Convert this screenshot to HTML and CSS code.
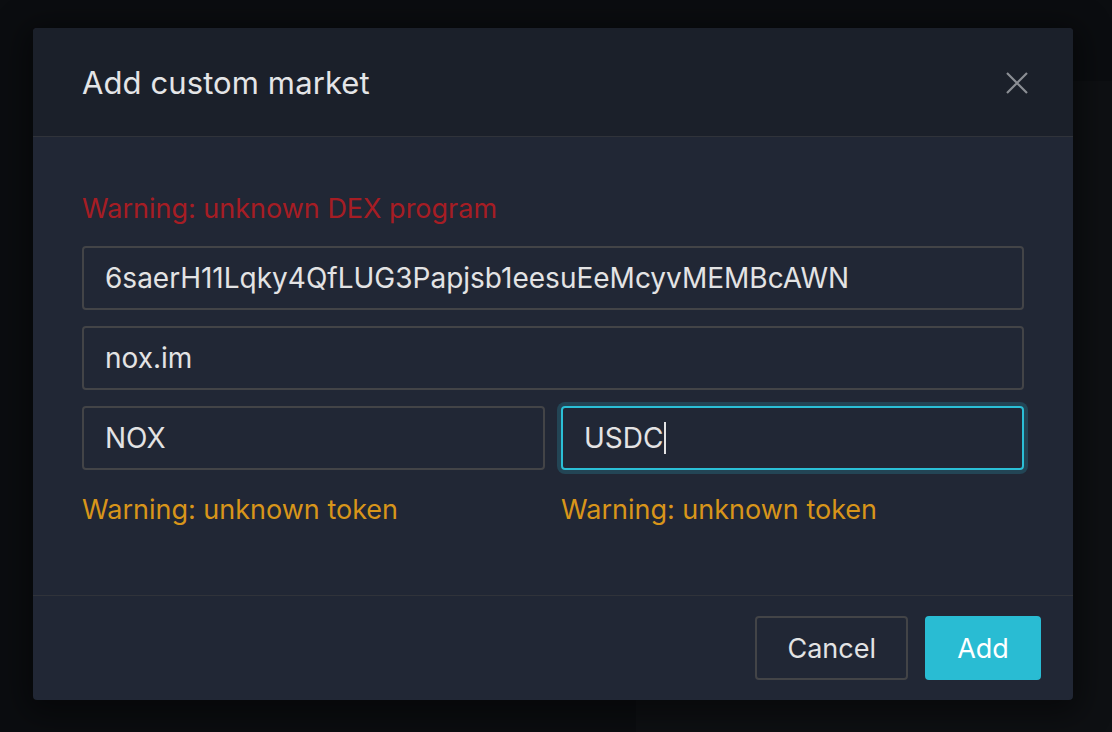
FILE: index.html
```html
<!DOCTYPE html>
<html>
<head>
<meta charset="UTF-8">
<title>Add custom market</title>
<link rel="stylesheet" href="styles.css">
</head>
<body>

<!-- dimmed page behind the mask -->
<div class="page-strip strip-right"></div>
<div class="page-strip strip-bottom"></div>

<div class="modal">
	<div class="modal-header">
		<div class="modal-title">Add custom market</div>
		<button type="button" class="modal-close" aria-label="Close">
			<svg width="24" height="24" viewBox="0 0 24 24">
				<path d="M2 2 L22 22 M22 2 L2 22" stroke="#8b8e94" stroke-width="2.2" fill="none"/>
			</svg>
		</button>
	</div>

	<div class="modal-body">
		<div class="msg msg-error">Warning: unknown DEX program</div>
		<div class="field">6saerH11Lqky4QfLUG3Papjsb1eesuEeMcyvMEMBcAWN</div>
		<div class="field">nox.im</div>
		<div class="row">
			<div class="col">
				<div class="field">NOX</div>
				<div class="msg msg-warn">Warning: unknown token</div>
			</div>
			<div class="col">
				<div class="field focused">USDC<span class="caret"></span></div>
				<div class="msg msg-warn">Warning: unknown token</div>
			</div>
		</div>
	</div>

	<div class="modal-footer">
		<button type="button" class="btn">Cancel</button>
		<button type="button" class="btn btn-primary">Add</button>
	</div>
</div>

</body>
</html>
```

FILE: styles.css
```css
* {box-sizing: border-box;}
body {margin: 0; width: 1112px; height: 732px; overflow: hidden; background: #0b0d10; font-family: Inter, "Liberation Sans", sans-serif; color: #e3e3e4; position: relative;}

.page-strip {position: absolute; background: #0e1013;}
.strip-right {left: 1073px; top: 81px; width: 39px; height: 651px;}
.strip-bottom {left: 636px; top: 700px; width: 476px; height: 32px;}

.modal {position: absolute; left: 33px; top: 28px; width: 1040px; height: 672px; border-radius: 4px; overflow: hidden; background: #212735; box-shadow: 0 6px 32px 8px rgba(0,0,0,0.45); display: flex; flex-direction: column;}

.modal-header {height: 109px; background: #1b202a; border-bottom: 1px solid #30333a; display: flex; align-items: center; justify-content: space-between; padding: 0 44px 0 49px;}
.modal-title {font-size: 31px; font-weight: 400; color: #e4e5e7; letter-spacing: 0.1px;}
.modal-close {background: none; border: 0; padding: 0; width: 24px; height: 24px; margin-top: 2px;}
.modal-close svg {display: block;}

.modal-body {flex: 1; padding: 51px 49px 0 49px; display: flex; flex-direction: column; gap: 16px;}
.msg {font-size: 27px; line-height: 42px; height: 42px;}
.msg-error {color: #a61d24;}
.msg-warn {color: #d8951a; margin-top: 3px;}

.field {height: 64px; border: 2px solid #434447; border-radius: 4px; padding: 0 21px; display: flex; align-items: center; font-size: 28px; color: #e3e3e4;}
.field.focused {border-color: #2bbfd6; box-shadow: 0 0 0 4px rgba(43,191,214,0.2);}
.caret {display: inline-block; width: 2px; height: 32px; background: #e3e3e4; margin-left: 1px;}

.row {display: flex; gap: 16px;}
.col {flex: 1; display: flex; flex-direction: column; gap: 16px;}

.modal-footer {height: 105px; border-top: 1px solid #30333a; display: flex; align-items: center; justify-content: flex-end; gap: 17px; padding: 0 32px 0 0;}
.btn {height: 64px; padding: 0 30px; font-family: Inter, "Liberation Sans", sans-serif; font-size: 27px; color: #e3e3e4; background: transparent; border: 2px solid #434447; border-radius: 4px;}
.btn-primary {background: #29bcd3; border-color: #29bcd3; color: #ffffff; width: 116px;}
```
